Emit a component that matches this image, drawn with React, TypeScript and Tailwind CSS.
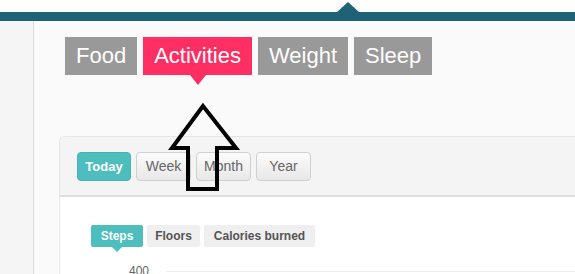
import React, { useState } from 'react';

const mainTabs = ['Food', 'Activities', 'Weight', 'Sleep'];
const ranges = ['Today', 'Week', 'Month', 'Year'];
const metrics = [
  { name: 'Steps', w: 'w-[52px]' },
  { name: 'Floors', w: 'w-[53px]' },
  { name: 'Calories burned', w: 'w-[111px]' },
];

export default function App() {
  const [tab, setTab] = useState('Activities');
  const [range, setRange] = useState('Today');
  const [metric, setMetric] = useState('Steps');

  return (
    <div className="relative w-[575px] h-[274px] overflow-hidden bg-white font-['Liberation_Sans',Arial,sans-serif]">
      {/* top bar */}
      <div className="h-[12px] bg-white" />
      <div className="relative h-[9px] bg-[#1f6275]">
        <div className="absolute left-[337px] top-[-10px] w-0 h-0 border-l-[11px] border-r-[11px] border-b-[10px] border-l-transparent border-r-transparent border-b-[#1f6275]" />
      </div>

      <div className="flex h-[253px]">
        <div className="w-[34px] shrink-0 bg-[#f5f5f5] border-r border-[#dcdcdc]" />

        <div className="flex-1 bg-[#fafafa] pl-[25px] pt-[16px]">
          {/* main tabs */}
          <div className="flex gap-[6px] ml-[6px]">
            {mainTabs.map((t) => (
              <button
                key={t}
                onClick={() => setTab(t)}
                className={`relative h-[38px] px-[11px] text-[22px] leading-[38px] text-white ${
                  tab === t ? 'bg-[#ff2e63]' : 'bg-[#999999]'
                }`}
              >
                {t}
                {tab === t && (
                  <span className="absolute left-1/2 -translate-x-1/2 top-[38px] w-0 h-0 border-l-[8px] border-r-[8px] border-t-[10px] border-l-transparent border-r-transparent border-t-[#ff2e63]" />
                )}
              </button>
            ))}
          </div>

          {/* card */}
          <div className="mt-[61px] rounded-tl-[6px] border-l border-t border-[#e6e6e6] bg-white">
            <div className="h-[60px] bg-[#f4f4f4] border-b-2 border-[#dedede] rounded-tl-[6px] pl-[17px] pt-[15px] flex gap-[5px]">
              {ranges.map((r) =>
                range === r ? (
                  <button
                    key={r}
                    onClick={() => setRange(r)}
                    className="h-[29px] w-[54px] rounded-[4px] bg-[#4dbdbd] border border-[#45b3b3] text-white text-[13px] font-bold"
                  >
                    {r}
                  </button>
                ) : (
                  <button
                    key={r}
                    onClick={() => setRange(r)}
                    className="h-[29px] w-[55px] rounded-[4px] border border-[#d0d0d0] bg-gradient-to-b from-[#fbfbfb] to-[#e8e8e8] text-[#666] text-[14px]"
                  >
                    {r}
                  </button>
                )
              )}
            </div>

            <div className="h-[80px] pl-[31px] pt-[28px] relative">
              <div className="flex gap-[4px]">
                {metrics.map((m) => (
                  <button
                    key={m.name}
                    onClick={() => setMetric(m.name)}
                    className={`relative h-[22px] ${m.w} rounded-[2px] text-[12px] font-bold ${
                      metric === m.name ? 'bg-[#4dbdbd] text-white' : 'bg-[#efefef] text-[#555]'
                    }`}
                  >
                    {m.name}
                    {metric === m.name && (
                      <span className="absolute left-1/2 -translate-x-1/2 top-[22px] w-0 h-0 border-l-[5px] border-r-[5px] border-t-[5px] border-l-transparent border-r-transparent border-t-[#4dbdbd]" />
                    )}
                  </button>
                ))}
              </div>
              <div className="flex items-center mt-[17px] ml-[38px]">
                <span className="text-[12px] text-[#666] leading-[14px]">400</span>
                <div className="flex-1 ml-[17px] h-px bg-[#eeeeee]" />
              </div>
            </div>
          </div>
        </div>
      </div>

      {/* annotation arrow */}
      <svg className="absolute left-0 top-0 pointer-events-none" width="575" height="274">
        <polygon
          points="203,106 172,148 188,148 188,189 217,189 217,148 236,148"
          fill="none"
          stroke="#000"
          strokeWidth="4"
          strokeLinejoin="miter"
        />
      </svg>
    </div>
  );
}
